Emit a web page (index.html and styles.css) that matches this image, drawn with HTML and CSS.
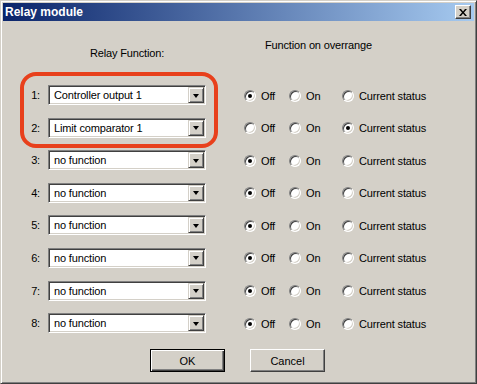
FILE: index.html
```html
<!DOCTYPE html>
<html>
<head>
    <title>Relay module</title>
    <link rel="stylesheet" href="styles.css">
</head>
<body>
    <div class="window">
        <div class="titlebar">
            <span class="title">Relay module</span>
            <button class="close-btn" title="Close">
                <svg width="8" height="7" viewBox="0 0 8 7"><path d="M0 0h2l2 2.5L6 0h2L5 3.5 8 7H6L4 4.5 2 7H0l3-3.5z" fill="#000"/></svg>
            </button>
        </div>

        <div class="content">
            <div class="header">
                <div class="head-relay">Relay Function:</div>
                <div class="head-over">Function on overrange</div>
            </div>

            <div class="rows">
                <div class="row">
                    <span class="num">1:</span>
                    <div class="combo"><span class="combo-text">Controller output 1</span><span class="drop"><i></i></span></div>
                    <div class="radios">
                        <label class="opt opt-off"><span class="radio checked"></span>Off</label>
                        <label class="opt opt-on"><span class="radio"></span>On</label>
                        <label class="opt"><span class="radio"></span>Current status</label>
                    </div>
                </div>
                <div class="row">
                    <span class="num">2:</span>
                    <div class="combo"><span class="combo-text">Limit comparator 1</span><span class="drop"><i></i></span></div>
                    <div class="radios">
                        <label class="opt opt-off"><span class="radio"></span>Off</label>
                        <label class="opt opt-on"><span class="radio"></span>On</label>
                        <label class="opt"><span class="radio checked"></span>Current status</label>
                    </div>
                </div>
                <div class="row">
                    <span class="num">3:</span>
                    <div class="combo"><span class="combo-text">no function</span><span class="drop"><i></i></span></div>
                    <div class="radios">
                        <label class="opt opt-off"><span class="radio checked"></span>Off</label>
                        <label class="opt opt-on"><span class="radio"></span>On</label>
                        <label class="opt"><span class="radio"></span>Current status</label>
                    </div>
                </div>
                <div class="row">
                    <span class="num">4:</span>
                    <div class="combo"><span class="combo-text">no function</span><span class="drop"><i></i></span></div>
                    <div class="radios">
                        <label class="opt opt-off"><span class="radio checked"></span>Off</label>
                        <label class="opt opt-on"><span class="radio"></span>On</label>
                        <label class="opt"><span class="radio"></span>Current status</label>
                    </div>
                </div>
                <div class="row">
                    <span class="num">5:</span>
                    <div class="combo"><span class="combo-text">no function</span><span class="drop"><i></i></span></div>
                    <div class="radios">
                        <label class="opt opt-off"><span class="radio checked"></span>Off</label>
                        <label class="opt opt-on"><span class="radio"></span>On</label>
                        <label class="opt"><span class="radio"></span>Current status</label>
                    </div>
                </div>
                <div class="row">
                    <span class="num">6:</span>
                    <div class="combo"><span class="combo-text">no function</span><span class="drop"><i></i></span></div>
                    <div class="radios">
                        <label class="opt opt-off"><span class="radio checked"></span>Off</label>
                        <label class="opt opt-on"><span class="radio"></span>On</label>
                        <label class="opt"><span class="radio"></span>Current status</label>
                    </div>
                </div>
                <div class="row">
                    <span class="num">7:</span>
                    <div class="combo"><span class="combo-text">no function</span><span class="drop"><i></i></span></div>
                    <div class="radios">
                        <label class="opt opt-off"><span class="radio checked"></span>Off</label>
                        <label class="opt opt-on"><span class="radio"></span>On</label>
                        <label class="opt"><span class="radio"></span>Current status</label>
                    </div>
                </div>
                <div class="row">
                    <span class="num">8:</span>
                    <div class="combo"><span class="combo-text">no function</span><span class="drop"><i></i></span></div>
                    <div class="radios">
                        <label class="opt opt-off"><span class="radio checked"></span>Off</label>
                        <label class="opt opt-on"><span class="radio"></span>On</label>
                        <label class="opt"><span class="radio"></span>Current status</label>
                    </div>
                </div>
            </div>

            <div class="buttons">
                <button class="btn btn-default">OK</button>
                <button class="btn">Cancel</button>
            </div>
        </div>

        <!-- annotation drawn over the first two relays -->
        <div class="highlight"></div>
    </div>
</body>
</html>
```

FILE: styles.css
```css
:root {
    --face: #d4d0c8;
    --shadow: #808080;
    --dark: #404040;
    --light: #ffffff;
    --title-from: #0a246a;
    --title-to: #a6caf0;
    --mark: #e8401c;
}

* {
    box-sizing: border-box;
}

body {
    margin: 0;
    font-family: "Liberation Sans", Arial, sans-serif;
    font-size: 11px;
    color: #000;
}

.window {
    position: relative;
    width: 477px;
    height: 384px;
    background-color: var(--face);
    border: 1px solid;
    border-color: var(--face) var(--dark) var(--dark) var(--face);
    box-shadow: inset 1px 1px var(--light), inset -1px -1px var(--shadow);
    padding: 2px;
    display: flex;
    flex-direction: column;
}

.titlebar {
    height: 18px;
    display: flex;
    align-items: center;
    justify-content: space-between;
    padding: 0 3px 0 2px;
    background: linear-gradient(to right, var(--title-from), var(--title-to));
}

.title {
    color: #fff;
    font-weight: bold;
    font-size: 12px;
}

.close-btn {
    width: 16px;
    height: 14px;
    padding: 0;
    display: flex;
    align-items: center;
    justify-content: center;
    background-color: var(--face);
    border: 1px solid;
    border-color: var(--light) var(--dark) var(--dark) var(--light);
    box-shadow: inset -1px -1px var(--shadow);
}

.content {
    flex: 1;
    padding-top: 18px;
    letter-spacing: -0.15px;
}

.header {
    display: flex;
    align-items: flex-start;
    height: 21px;
    line-height: 13px;
}

.head-relay {
    width: 158px;
    margin-left: 45px;
    margin-top: 8px;
    text-align: center;
}

.head-over {
    margin-left: 59px;
}

.rows {
    margin-top: 25px;
    display: flex;
    flex-direction: column;
    gap: 12.6px;
}

.row {
    display: flex;
    align-items: center;
    height: 20px;
}

.num {
    width: 37px;
    text-align: right;
    margin-right: 8px;
}

.combo {
    width: 158px;
    height: 20px;
    display: flex;
    align-items: center;
    background-color: #fff;
    border: 1px solid;
    border-color: var(--shadow) var(--light) var(--light) var(--shadow);
    box-shadow: inset 1px 1px var(--dark), inset -1px -1px var(--face);
    padding: 1px;
}

.combo-text {
    flex: 1;
    padding-left: 4px;
}

.drop {
    width: 16px;
    height: 16px;
    display: flex;
    align-items: center;
    justify-content: center;
    background-color: var(--face);
    border: 1px solid;
    border-color: var(--face) var(--dark) var(--dark) var(--face);
    box-shadow: inset 1px 1px var(--light), inset -1px -1px var(--shadow);
}

.drop i {
    width: 0;
    height: 0;
    border-left: 3.5px solid transparent;
    border-right: 3.5px solid transparent;
    border-top: 4px solid #000;
    margin-top: 1px;
}

.radios {
    display: flex;
    align-items: center;
    margin-left: 38px;
    padding-top: 1px;
}

.opt {
    display: flex;
    align-items: center;
}

.opt-off {
    width: 45px;
}

.opt-on {
    width: 53px;
}

.radio {
    width: 12px;
    height: 12px;
    margin-right: 5px;
    border-radius: 50%;
    background-color: #fff;
    border: 1px solid;
    border-color: var(--shadow) var(--light) var(--light) var(--shadow);
    box-shadow: inset 1px 1px var(--dark), inset -1px -1px var(--face);
    display: flex;
    align-items: center;
    justify-content: center;
}

.radio.checked::after {
    content: "";
    width: 4px;
    height: 4px;
    border-radius: 50%;
    background-color: #000;
}

.buttons {
    display: flex;
    justify-content: center;
    gap: 25px;
    margin-top: 16px;
    padding-right: 2px;
}

.btn {
    width: 75px;
    height: 23px;
    font-family: "Liberation Sans", Arial, sans-serif;
    font-size: 11px;
    color: #000;
    background-color: var(--face);
    border: 1px solid;
    border-color: var(--light) var(--dark) var(--dark) var(--light);
    box-shadow: inset -1px -1px var(--shadow);
    padding: 0;
}

.btn-default {
    border-color: #000;
    box-shadow: inset 1px 1px var(--light), inset -1px -1px var(--dark), inset -2px -2px var(--shadow);
}

.highlight {
    position: absolute;
    left: 19px;
    top: 71px;
    width: 198px;
    height: 76px;
    border: 4px solid var(--mark);
    border-radius: 16px;
    pointer-events: none;
}
```
